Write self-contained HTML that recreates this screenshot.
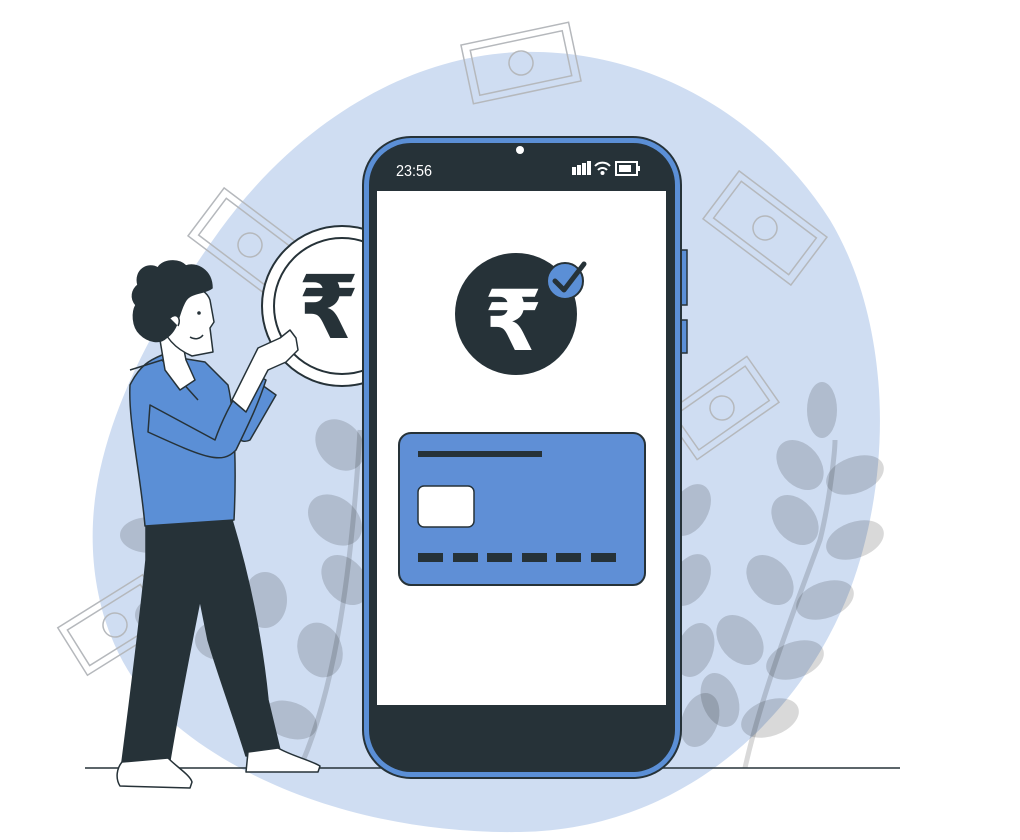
<!DOCTYPE html>
<html><head><meta charset="utf-8"><style>html,body{margin:0;padding:0;background:#fff}svg{display:block}</style></head>
<body>
<svg width="1020" height="840" viewBox="0 0 1020 840" xmlns="http://www.w3.org/2000/svg">
<!-- blob -->
<path d="M520,52 C640,48 760,110 830,220 C890,320 895,470 850,590 C800,720 680,830 520,832 C380,834 250,790 170,720 C100,660 80,560 100,470 C120,380 170,300 220,230 C300,120 410,56 520,52 Z" fill="#cfddf2"/>
<!-- bills -->
<g fill="none" stroke="#b5b8bc" stroke-width="1.5">
 <g transform="translate(521,63) rotate(-12)"><rect x="-55" y="-30" width="110" height="60"/><rect x="-47" y="-23" width="94" height="46"/><circle r="12"/></g>
 <g transform="translate(765,228) rotate(37)"><rect x="-55" y="-30" width="110" height="60"/><rect x="-47" y="-23" width="94" height="46"/><circle r="12"/></g>
 <g transform="translate(722,408) rotate(-35)"><rect x="-50" y="-28" width="100" height="56"/><rect x="-43" y="-21" width="86" height="42"/><circle r="12"/></g>
 <g transform="translate(250,245) rotate(37)"><rect x="-55" y="-30" width="110" height="60"/><rect x="-47" y="-23" width="94" height="46"/><circle r="12"/></g>
 <g transform="translate(115,625) rotate(-32)"><rect x="-50" y="-28" width="100" height="56"/><rect x="-43" y="-21" width="86" height="42"/><circle r="12"/></g>
</g>
<!-- leaves -->
<g fill="#000" fill-opacity="0.15">
 <path d="M745,768 C760,700 790,620 820,540 C830,500 835,450 835,440" fill="none" stroke="#000" stroke-opacity=".15" stroke-width="5"/>
 <ellipse cx="822" cy="410" rx="15" ry="28"/>
 <ellipse cx="800" cy="465" rx="20" ry="28" transform="rotate(-40 800 465)"/>
 <ellipse cx="855" cy="475" rx="30" ry="18" transform="rotate(-20 855 475)"/>
 <ellipse cx="795" cy="520" rx="20" ry="28" transform="rotate(-40 795 520)"/>
 <ellipse cx="855" cy="540" rx="30" ry="18" transform="rotate(-20 855 540)"/>
 <ellipse cx="770" cy="580" rx="20" ry="28" transform="rotate(-40 770 580)"/>
 <ellipse cx="825" cy="600" rx="30" ry="18" transform="rotate(-20 825 600)"/>
 <ellipse cx="740" cy="640" rx="20" ry="28" transform="rotate(-40 740 640)"/>
 <ellipse cx="795" cy="660" rx="30" ry="18" transform="rotate(-20 795 660)"/>
 <ellipse cx="720" cy="700" rx="18" ry="28" transform="rotate(-20 720 700)"/>
 <ellipse cx="770" cy="718" rx="30" ry="18" transform="rotate(-20 770 718)"/>
 <ellipse cx="690" cy="510" rx="18" ry="28" transform="rotate(30 690 510)"/>
 <ellipse cx="690" cy="580" rx="18" ry="28" transform="rotate(30 690 580)"/>
 <ellipse cx="695" cy="650" rx="18" ry="28" transform="rotate(20 695 650)"/>
 <ellipse cx="700" cy="720" rx="18" ry="28" transform="rotate(20 700 720)"/>
 <path d="M300,768 C330,700 350,600 360,430" fill="none" stroke="#000" stroke-opacity=".15" stroke-width="5"/>
 <ellipse cx="340" cy="445" rx="22" ry="28" transform="rotate(-40 340 445)"/>
 <ellipse cx="335" cy="520" rx="22" ry="30" transform="rotate(-50 335 520)"/>
 <ellipse cx="345" cy="580" rx="20" ry="28" transform="rotate(-40 345 580)"/>
 <ellipse cx="320" cy="650" rx="22" ry="28" transform="rotate(-20 320 650)"/>
 <ellipse cx="150" cy="535" rx="30" ry="18"/>
 <ellipse cx="160" cy="615" rx="25" ry="18"/>
 <ellipse cx="265" cy="600" rx="22" ry="28"/>
 <ellipse cx="220" cy="640" rx="25" ry="20"/>
 <ellipse cx="290" cy="720" rx="28" ry="18" transform="rotate(20 290 720)"/>
</g>
<!-- ground -->
<line x1="85" y1="768" x2="900" y2="768" stroke="#263238" stroke-width="1.5"/>
<!-- coin -->
<circle cx="342" cy="306" r="80" fill="#fff" stroke="#263238" stroke-width="2"/>
<circle cx="342" cy="306" r="68" fill="#fff" stroke="#263238" stroke-width="2"/>
<text x="298" y="338" font-family="DejaVu Sans, sans-serif" font-size="88" font-weight="bold" fill="#263238">₹</text>
<!-- phone -->
<rect x="680" y="250" width="7" height="55" fill="#5b8fd6" stroke="#263238" stroke-width="1.5"/>
<rect x="680" y="320" width="7" height="33" fill="#5b8fd6" stroke="#263238" stroke-width="1.5"/>
<rect x="363" y="137" width="318" height="641" rx="48" fill="#5b8fd6" stroke="#263238" stroke-width="2"/>
<rect x="369" y="143" width="306" height="629" rx="42" fill="#263238"/>
<rect x="377" y="191" width="289" height="514" fill="#fff"/>
<circle cx="520" cy="150" r="4" fill="#fff"/>
<text x="440" y="176" font-family="Liberation Sans Narrow, Liberation Sans, sans-serif" font-size="16" fill="#fff" transform="scale(0.9 1)">23:56</text>
<g fill="#fff"><rect x="572" y="167" width="4" height="8"/><rect x="577" y="165" width="4" height="10"/><rect x="582" y="163" width="4" height="12"/><rect x="587" y="161" width="4" height="14"/></g>
<g fill="none" stroke="#fff" stroke-width="2"><path d="M595,166 a10,10 0 0 1 15,0"/><path d="M598,170 a6,6 0 0 1 9,0"/></g>
<circle cx="602.5" cy="173" r="2" fill="#fff"/>
<rect x="616" y="162" width="21" height="13" fill="none" stroke="#fff" stroke-width="2"/><rect x="619" y="165" width="12" height="7" fill="#fff"/><rect x="638" y="166" width="2" height="5" fill="#fff"/>
<!-- screen icon -->
<circle cx="516" cy="314" r="61" fill="#263238"/>
<text x="484" y="350" font-family="DejaVu Sans, sans-serif" font-size="84" font-weight="bold" fill="#fff">₹</text>
<circle cx="565" cy="281" r="18" fill="#5b8fd6" stroke="#263238" stroke-width="2"/>
<path d="M555,281 L564,290 L584,264" fill="none" stroke="#263238" stroke-width="5" stroke-linecap="round" stroke-linejoin="round"/>
<!-- card -->
<rect x="399" y="433" width="246" height="152" rx="12" fill="#5f8fd6" stroke="#263238" stroke-width="2"/>
<rect x="418" y="451" width="124" height="6" fill="#263238"/>
<rect x="418" y="486" width="56" height="41" rx="6" fill="#fff" stroke="#263238" stroke-width="1.5"/>
<g fill="#263238"><rect x="418" y="553" width="25" height="9"/><rect x="453" y="553" width="25" height="9"/><rect x="487" y="553" width="25" height="9"/><rect x="522" y="553" width="25" height="9"/><rect x="556" y="553" width="25" height="9"/><rect x="591" y="553" width="25" height="9"/></g>
<!-- person -->
<g stroke="#263238" stroke-width="1.5" stroke-linejoin="round">
 <!-- pants -->
 <path d="M146,525 L232,520 C250,580 262,640 268,700 L280,750 L246,756 C235,720 220,680 208,640 L200,600 C190,650 180,700 170,760 L122,762 C130,700 140,620 146,560 Z" fill="#263238"/>
 <!-- shoes -->
 <path d="M122,762 L168,758 C178,768 190,775 192,782 L190,788 L120,786 C115,778 117,768 122,762 Z" fill="#fff"/>
 <path d="M248,752 L278,748 C292,756 310,760 320,766 L318,772 L246,772 Z" fill="#fff"/>
 <!-- hoodie -->
 <path d="M162,355 L205,362 L228,385 C236,420 236,480 234,520 L145,526 C140,470 128,420 130,385 C140,365 150,360 162,355 Z" fill="#5b8fd6"/>
 <path d="M130,370 L162,360 L198,400" fill="none"/>
 <!-- arm back -->
 <path d="M235,420 L262,385 L276,395 L250,440 C240,445 232,435 235,420 Z" fill="#5b8fd6"/>
 <!-- front arm -->
 <path d="M150,405 L215,440 C222,420 235,395 250,372 L266,380 C258,405 248,425 236,450 C222,465 205,458 148,432 Z" fill="#5b8fd6"/>
 <path d="M232,400 L258,348 L280,338 L290,330 L296,338 L298,350 L286,362 L268,370 L246,412 Z" fill="#fff"/>
 <!-- neck/face -->
 <path d="M160,340 L180,330 L186,360 L195,380 L180,390 L165,370 Z" fill="#fff"/>
 <path d="M168,292 C178,280 205,285 210,300 L214,322 L210,328 L213,352 L192,356 C178,350 165,340 160,320 Z" fill="#fff"/>
 <!-- hair -->
 <path d="M138,285 C134,270 148,262 158,268 C162,260 178,258 186,266 C196,262 212,270 212,288 C204,294 192,292 186,300 C182,306 180,314 178,320 C176,328 172,334 166,338 C160,344 148,342 140,334 C132,326 132,312 136,305 C130,298 132,290 138,285 Z" fill="#263238"/>
 <path d="M170,318 C176,312 182,318 178,326" fill="#fff"/>
 <path d="M190,337 C195,340 200,339 203,335" fill="none"/>
</g>
<circle cx="199" cy="313" r="1.8" fill="#263238"/>
</svg>
</body></html>
